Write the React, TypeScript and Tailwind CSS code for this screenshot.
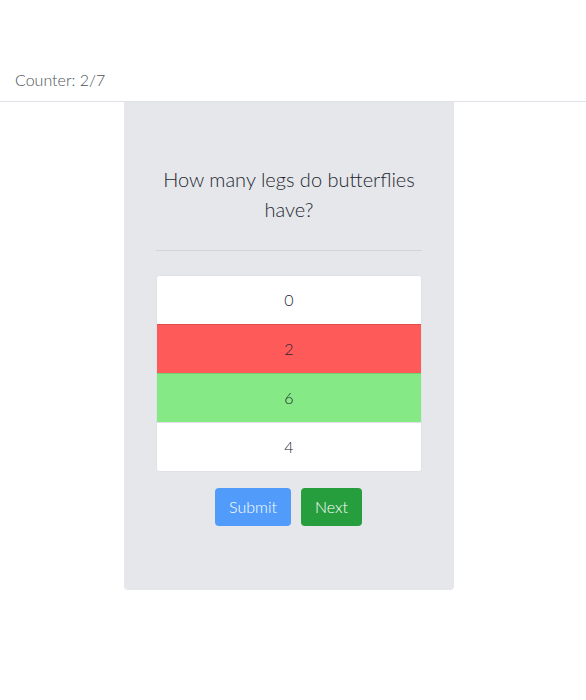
const answers = [
  { label: '0', state: 'none' },
  { label: '2', state: 'wrong' },
  { label: '6', state: 'right' },
  { label: '4', state: 'none' },
]

export default function App() {
  return (
    <div className="min-h-[700px] bg-white font-['Lato',sans-serif] text-[#1f2630]">
      <div className="border-b border-[#dee2e6] px-[15px] pt-[68px] pb-[9px] text-base leading-6 font-light text-[#4b5259]">
        Counter: 2/7
      </div>

      <div className="ml-[124px] w-[330px] rounded-b bg-[#e5e7eb] px-8 pt-[62px] pb-16">
        <h2 className="text-center text-xl leading-[30px] font-light">
          How many legs do butterflies have?
        </h2>
        <hr className="mt-[26px] mb-6 border-t border-[#d1d5db]" />

        <ul className="overflow-hidden rounded border border-[#dee2e6] bg-white font-light">
          {answers.map((a, i) => (
            <li
              key={i}
              className={`flex items-center justify-center text-base ${
                i > 0 ? 'h-[49px] border-t' : 'h-12'
              } ${
                a.state === 'wrong'
                  ? 'border-[#e04c4c] bg-[#ff5a5a]'
                  : a.state === 'right'
                    ? 'border-[#6fd26f] bg-[#85ea85]'
                    : 'border-[#dee2e6] bg-white'
              }`}
            >
              {a.label}
            </li>
          ))}
        </ul>

        <div className="mt-4 flex gap-[10px] pl-[59px]">
          <button className="h-[38px] w-[76px] rounded bg-[#519cfb] text-base font-light text-white">
            Submit
          </button>
          <button className="h-[38px] w-[61px] rounded bg-[#279e3e] text-base font-light text-white">
            Next
          </button>
        </div>
      </div>
    </div>
  )
}
